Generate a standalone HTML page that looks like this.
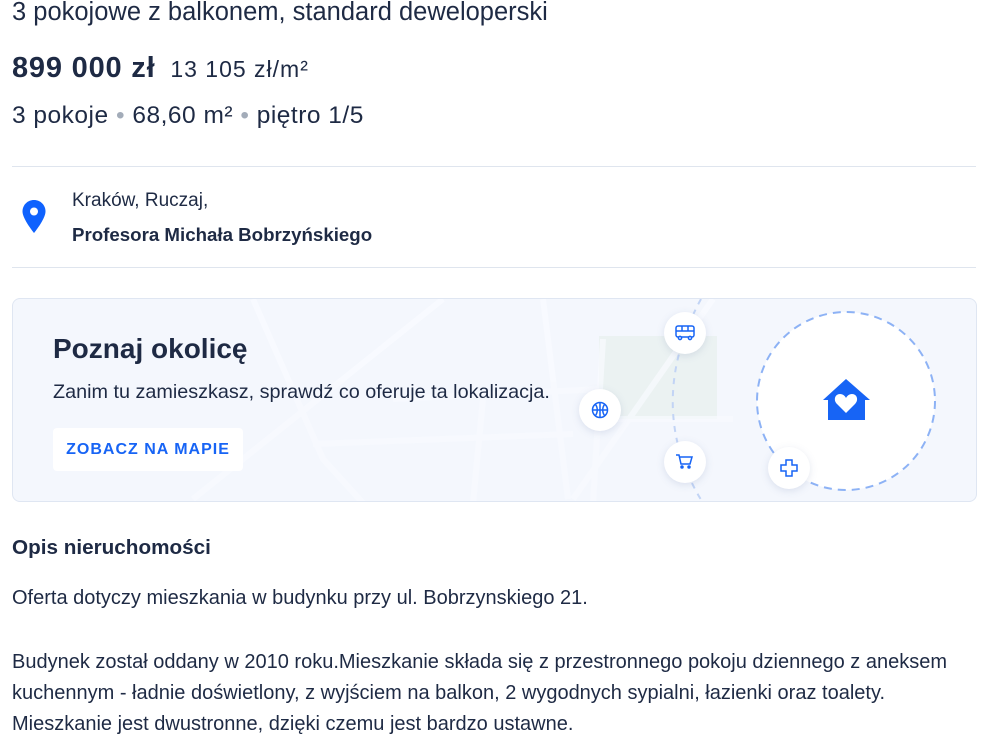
<!DOCTYPE html>
<html><head><meta charset="utf-8"><style>
*{margin:0;padding:0;box-sizing:border-box}
body{width:1005px;height:741px;overflow:hidden;background:#fff;font-family:"Liberation Sans",sans-serif;color:#1e2a44;position:relative}
.a{position:absolute;white-space:nowrap}
.dot{color:#a3acb9}
</style></head><body>
<div class="a" style="left:12px;top:-3px;font-size:25.5px;line-height:30px">3 pokojowe z balkonem, standard deweloperski</div>
<div class="a" style="left:12px;top:51px;font-size:29px;font-weight:bold;line-height:34px;letter-spacing:.8px">899 000 zł <span style="font-size:23px;font-weight:normal;margin-left:6px;letter-spacing:1px">13 105 zł/m²</span></div>
<div class="a" style="left:12px;top:101px;font-size:24.5px;line-height:30px;letter-spacing:.5px">3 pokoje <span class="dot">•</span> 68,60 m² <span class="dot">•</span> piętro 1/5</div>
<div class="a" style="left:12px;top:166px;width:964px;height:1px;background:#dfe5ee"></div>
<svg class="a" style="left:21px;top:199px" width="26" height="36" viewBox="0 0 26 36"><path d="M13 1C6.5 1 1.5 6 1.5 12.5 1.5 20 13 34 13 34S24.5 20 24.5 12.5C24.5 6 19.5 1 13 1z" fill="#0f62fe"/><circle cx="13" cy="12.5" r="4" fill="#fff"/></svg>
<div class="a" style="left:72px;top:189px;font-size:19px;line-height:24px">Kraków, Ruczaj,</div>
<div class="a" style="left:72px;top:223px;font-size:18.7px;font-weight:bold;line-height:24px">Profesora Michała Bobrzyńskiego</div>
<div class="a" style="left:12px;top:267px;width:964px;height:1px;background:#dfe5ee"></div>
<div class="a" style="left:12px;top:298px;width:965px;height:204px;border:1px solid #dfe6f2;border-radius:8px;background:#f4f7fd;overflow:hidden">
<svg width="965" height="204" style="position:absolute;left:0;top:0">
<rect x="586" y="37" width="118" height="83" fill="#ebf2f2"/>
<g stroke="#f9fbff" stroke-width="6" fill="none" opacity=".7">
<path d="M180 200 L430 0"/><path d="M240 0 L310 160 L350 204"/><path d="M300 145 L560 135"/><path d="M530 0 L555 200"/><path d="M560 200 L700 0"/>
<path d="M590 120 L720 120"/><path d="M590 40 L580 204"/><path d="M460 204 L470 100"/><path d="M380 100 L590 90"/>
</g>
<path d="M688 0 C650 70 650 140 690 204" stroke="#c2d4f5" stroke-width="2" stroke-dasharray="6 6" fill="none"/>
<circle cx="833" cy="102" r="89" fill="#fff" stroke="#8db2f5" stroke-width="2" stroke-dasharray="8 6"/>
<path d="M833 80 L810 101 L815 101 L815 121 L852 121 L852 101 L857 101 Z" fill="#1764f5"/>
<path d="M833 114 L824 105 C820 101 822 95 827 95 C830 95 832 97 833 99 C834 97 836 95 839 95 C844 95 846 101 842 105 Z" fill="#fff"/>
<g filter="drop-shadow(0 2px 4px rgba(30,60,120,.12))" fill="#fff"><circle cx="672" cy="34" r="21"/><circle cx="587" cy="111" r="21"/><circle cx="672" cy="163" r="21"/><circle cx="776" cy="169" r="21"/></g>
<g stroke="#1764f5" stroke-width="1.5" fill="none">
<rect x="663" y="27" width="18" height="11" rx="2"/><path d="M663 32h18M669 27v5M675 27v5"/><circle cx="667" cy="39" r="1.6" fill="#fff"/><circle cx="677" cy="39" r="1.6" fill="#fff"/>
<circle cx="587" cy="111" r="7.5"/><path d="M579.5 111h15M587 103.5v15M582 105c3 3 3 9 0 12M592 105c-3 3-3 9 0 12"/>
<path d="M663 156h3l2 9h9l2-7h-12"/><circle cx="669" cy="168" r="1" fill="#1764f5"/><circle cx="676" cy="168" r="1" fill="#1764f5"/>
<path d="M773 161h6v5h5v6h-5v5h-6v-5h-5v-6h5z"/>
</g>
</svg>
<div class="a" style="left:40px;top:32px;font-size:28px;font-weight:bold;line-height:36px">Poznaj okolicę</div>
<div class="a" style="left:40px;top:81px;font-size:19.8px;line-height:24px">Zanim tu zamieszkasz, sprawdź co oferuje ta lokalizacja.</div>
<div class="a" style="left:40px;top:129px;width:190px;height:43px;background:#fff;border-radius:4px;color:#1764f5;font-weight:bold;font-size:16px;letter-spacing:1px;line-height:43px;text-align:center">ZOBACZ NA MAPIE</div>
</div>
<div class="a" style="left:12px;top:535px;font-size:20.7px;font-weight:bold;line-height:26px">Opis nieruchomości</div>
<div class="a" style="left:12px;top:585px;font-size:20px;line-height:26px">Oferta dotyczy mieszkania w budynku przy ul. Bobrzynskiego 21.</div>
<div class="a" style="left:12px;top:647px;font-size:20px;line-height:31px">Budynek został oddany w 2010 roku.Mieszkanie składa się z przestronnego pokoju dziennego z aneksem<br>kuchennym - ładnie doświetlony, z wyjściem na balkon, 2 wygodnych sypialni, łazienki oraz toalety.<br>Mieszkanie jest dwustronne, dzięki czemu jest bardzo ustawne.</div>
</body></html>
